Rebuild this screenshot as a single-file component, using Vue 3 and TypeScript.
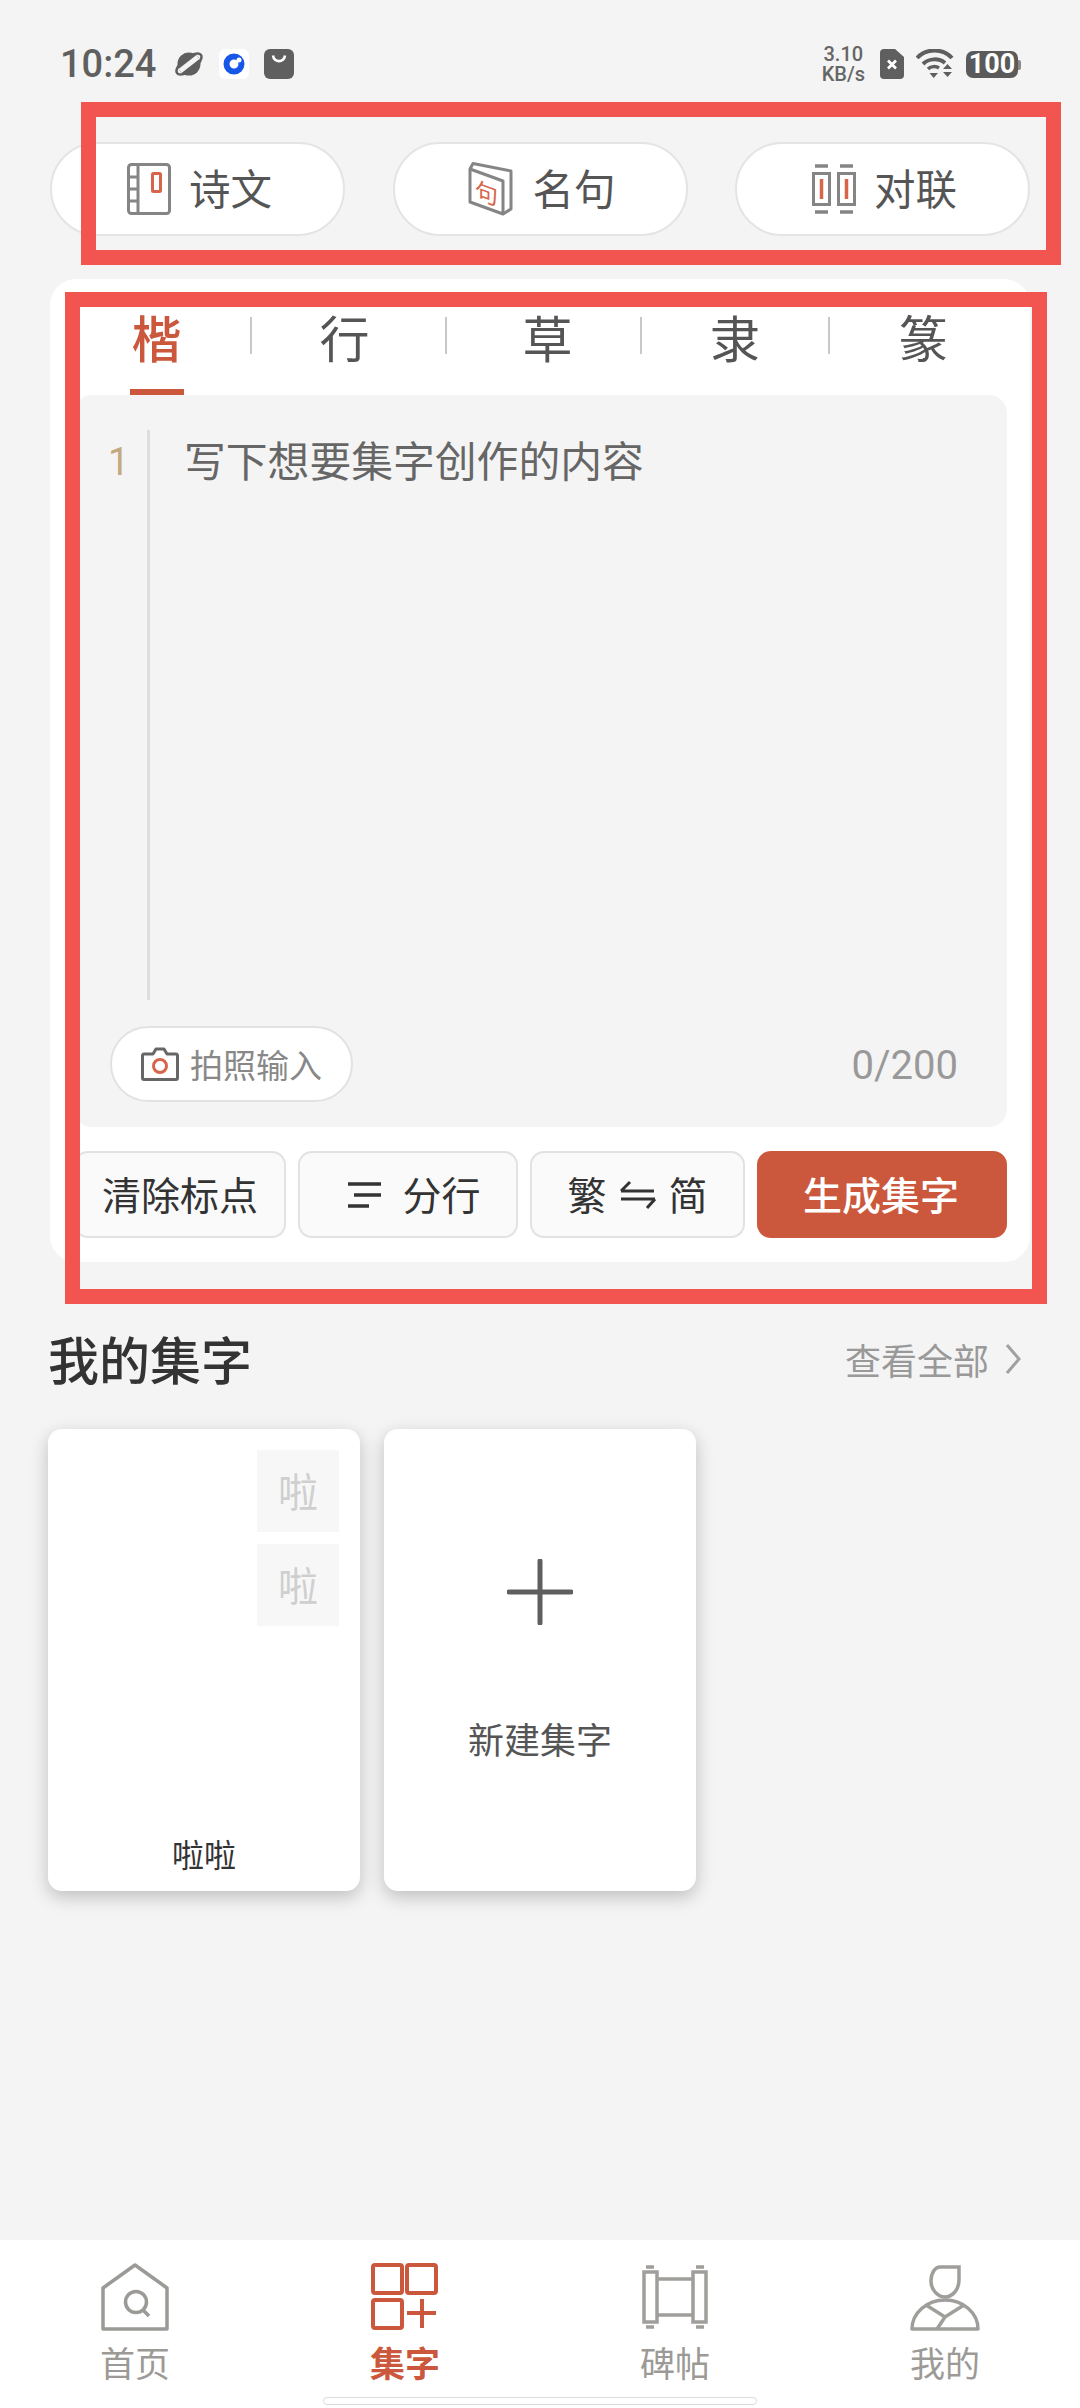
<template>
  <div class="page">
    <div class="status">
      <span class="time">10:24</span>
      <svg class="st-planet" width="30" height="28" viewBox="0 0 30 28">
        <circle cx="15" cy="14" r="11.5" fill="#5f5f5f" />
        <path d="M6 21 L24 7" stroke="#f4f4f4" stroke-width="5" />
        <ellipse cx="15" cy="14" rx="15" ry="6.5" transform="rotate(-38 15 14)" fill="none" stroke="#5f5f5f" stroke-width="2.5" />
      </svg>
      <span class="st-app">
        <svg width="22" height="22" viewBox="0 0 22 22">
          <circle cx="11" cy="11" r="7.5" fill="none" stroke="#1657e8" stroke-width="6" />
          <circle cx="16" cy="7" r="2.5" fill="#fff" />
        </svg>
      </span>
      <span class="st-bag">
        <svg width="16" height="10" viewBox="0 0 16 10">
          <path d="M2 1.5 C3 9 13 9 14 1.5" fill="none" stroke="#fff" stroke-width="2.6" />
        </svg>
      </span>
      <div class="status-right">
        <div class="speed"><span>3.10</span><span>KB/s</span></div>
        <svg width="24" height="30" viewBox="0 0 24 30">
          <path d="M4 0 H15 L24 8 V26 Q24 30 20 30 H4 Q0 30 0 26 V4 Q0 0 4 0Z" fill="#5f5f5f" />
          <path d="M8 11.5 L16 19.5 M16 11.5 L8 19.5" stroke="#fff" stroke-width="2.8" />
        </svg>
        <svg width="38" height="30" viewBox="0 0 38 30">
          <path d="M1 9 C10 -1 27 -1 36 9" fill="none" stroke="#5f5f5f" stroke-width="4" />
          <path d="M7 15 C13 9 23 9 29 14" fill="none" stroke="#5f5f5f" stroke-width="4" />
          <path d="M12 20 C15 17 20 17 23 19" fill="none" stroke="#5f5f5f" stroke-width="3.5" />
          <path d="M13.5 24 H22 L17.7 29Z" fill="#5f5f5f" />
          <path d="M27 20 L31.5 15 L36 20Z M27 23 H36 L31.5 28Z" fill="#5f5f5f" />
        </svg>
        <span class="battery">100</span>
      </div>
    </div>

    <div class="pills">
      <div class="pill">
        <svg width="44" height="52" viewBox="0 0 44 52" fill="none">
          <rect x="1.5" y="1.5" width="41" height="49" rx="3" stroke="#858585" stroke-width="3" />
          <path d="M11 2 V50" stroke="#858585" stroke-width="3" />
          <path d="M2 14 H11 M2 26 H11 M2 38 H11" stroke="#858585" stroke-width="3" />
          <rect x="25.5" y="10.5" width="8" height="18" rx="1" stroke="#d8654a" stroke-width="3" />
        </svg>
        <span>诗文</span>
      </div>
      <div class="pill">
        <svg width="46" height="54" viewBox="0 0 46 54" fill="none">
          <path d="M2 7 L35 19 V52 L2 40Z" stroke="#858585" stroke-width="3" stroke-linejoin="round" />
          <path d="M2 7 L5 1.500 L43 9 V47 L35 52" stroke="#858585" stroke-width="3" stroke-linejoin="round" />
          <text x="7" y="33" class="icon-ju" transform="skewY(20)">句</text>
        </svg>
        <span>名句</span>
      </div>
      <div class="pill">
        <svg width="44" height="50" viewBox="0 0 44 50" fill="none">
          <path d="M3 2 H16 M28 2 H41 M3 48 H16 M28 48 H41" stroke="#858585" stroke-width="3.500" />
          <rect x="1.5" y="9.5" width="16" height="31" stroke="#858585" stroke-width="3" />
          <rect x="26.5" y="9.5" width="16" height="31" stroke="#858585" stroke-width="3" />
          <path d="M9.5 15 V35 M34.5 15 V35" stroke="#d8654a" stroke-width="3.500" />
        </svg>
        <span>对联</span>
      </div>
    </div>

    <div class="card">
      <div class="tabs">
        <template v-for="(tab, i) in scripts" :key="tab">
          <i v-if="i > 0" class="sep"></i>
          <div class="tab" :class="'tab-' + i">
            <span class="tab-label" :class="{ active: i === 0 }">{{ tab }}</span>
          </div>
        </template>
      </div>

      <div class="editor">
        <div class="lines">
          <span class="line-no">1</span>
          <span class="placeholder">写下想要集字创作的内容</span>
        </div>
        <div class="editor-foot">
          <div class="photo">
            <svg width="38" height="34" viewBox="0 0 38 34" fill="none">
              <path d="M3 7 H12 L15 2 H23 L26 7 H35 Q36.500 7 36.500 9 V31 Q36.500 32.500 35 32.500 H3 Q1.500 32.500 1.500 31 V9 Q1.500 7 3 7Z" stroke="#666" stroke-width="3" stroke-linejoin="round" />
              <circle cx="19" cy="19" r="6.500" stroke="#d8654a" stroke-width="3" />
            </svg>
            <span>拍照输入</span>
          </div>
          <span class="count">0/200</span>
        </div>
      </div>

      <div class="actions">
        <div class="act act-clear">清除标点</div>
        <div class="act act-split">
          <svg width="36" height="28" viewBox="0 0 36 28">
            <path d="M1 3 H34 M7 14 H34 M1 25 H22" stroke="#333" stroke-width="3.500" />
          </svg>
          <span>分行</span>
        </div>
        <div class="act act-conv">
          <span>繁</span>
          <svg width="36" height="30" viewBox="0 0 36 30" fill="none">
            <path d="M1 11 H34 M1 11 L10 2" stroke="#333" stroke-width="3" />
            <path d="M1 19 H35 M35 19 L27 28" stroke="#333" stroke-width="3" />
          </svg>
          <span>简</span>
        </div>
        <div class="act act-go">生成集字</div>
      </div>
    </div>

    <div class="mine-head">
      <span class="mine-title">我的集字</span>
      <div class="mine-all">
        <span>查看全部</span>
        <svg width="18" height="34" viewBox="0 0 18 34" fill="none">
          <path d="M3 3 L15 17 L3 31" stroke="#a0a0a0" stroke-width="3" />
        </svg>
      </div>
    </div>

    <div class="works">
      <div class="work">
        <div class="tile">啦</div>
        <div class="tile">啦</div>
        <div class="work-title">啦啦</div>
      </div>
      <div class="work work-new">
        <svg width="66" height="66" viewBox="0 0 66 66">
          <path d="M33 2 V64 M2 33 H64" stroke="#5f5f5f" stroke-width="5" stroke-linecap="round" />
        </svg>
        <span>新建集字</span>
      </div>
    </div>

    <div class="nav">
      <div class="nav-item">
        <svg width="70" height="70" viewBox="0 0 70 70" fill="none" stroke="#9c9a96" stroke-width="3.500">
          <path d="M35 3 L67 26 V67 H3 V26Z" stroke-linejoin="round" />
          <circle cx="36" cy="40" r="10.500" />
          <path d="M43 48 L49 54" />
        </svg>
        <span>首页</span>
      </div>
      <div class="nav-item on">
        <svg width="70" height="70" viewBox="0 0 70 70" fill="none" stroke="#cb583d" stroke-width="4">
          <rect x="3" y="3" width="29" height="28" rx="2" />
          <rect x="37" y="3" width="29" height="28" rx="2" />
          <rect x="3" y="38" width="29" height="28" rx="2" />
          <path d="M37 51 H66 M52 37 V66" />
        </svg>
        <span>集字</span>
      </div>
      <div class="nav-item">
        <svg width="70" height="70" viewBox="0 0 70 70" fill="none" stroke="#a09e9a" stroke-width="3.500">
          <rect x="4" y="10" width="13" height="50" />
          <rect x="53" y="10" width="13" height="50" />
          <path d="M17 17 H53 M17 53 H53" />
          <path d="M6 5 H14 M56 5 H64 M6 65 H14 M56 65 H64" />
        </svg>
        <span>碑帖</span>
      </div>
      <div class="nav-item">
        <svg width="70" height="70" viewBox="0 0 70 70" fill="none" stroke="#a09e9a" stroke-width="3.500">
          <path d="M30 5 H49 V18 C49 28 42 35 35 35 C28 35 21 28 21 19 C21 11 25 5 30 5Z" />
          <path d="M2 67 A33 29 0 0 1 68 67Z" stroke-linejoin="round" />
          <path d="M16 43 L35 55 L54 43 M35 55 L27 67" />
        </svg>
        <span>我的</span>
      </div>
    </div>
    <div class="home-bar"></div>

    <div class="mark mark-top"></div>
    <div class="mark mark-main"></div>
  </div>
</template>

<script setup lang="ts">
const scripts: string[] = ['楷', '行', '草', '隶', '篆']
</script>

<style>
html,
body {
  margin: 0;
  background: #f4f4f4;
}
</style>

<style scoped>
.page {
  position: relative;
  width: 1080px;
  height: 2408px;
  overflow: hidden;
  display: flex;
  flex-direction: column;
  background: #f4f4f4;
  font-family: "Noto Sans CJK SC", Roboto, sans-serif;
  color: #333;
}

.status {
  display: flex;
  align-items: center;
  height: 34px;
  margin-top: 47px;
  padding: 0 60px 0 60px;
}

.time {
  font-family: Roboto, sans-serif;
  font-weight: 500;
  font-size: 38px;
  line-height: 34px;
  color: #5f5f5f;
}

.st-planet {
  margin-left: 18px;
}

.st-app {
  display: flex;
  align-items: center;
  justify-content: center;
  width: 30px;
  height: 30px;
  margin-left: 15px;
  border-radius: 6px;
  background: #fff;
}

.st-bag {
  display: flex;
  justify-content: center;
  width: 30px;
  height: 30px;
  margin-left: 15px;
  padding-top: 5px;
  box-sizing: border-box;
  border-radius: 6px;
  background: #5f5f5f;
}

.status-right {
  display: flex;
  align-items: center;
  gap: 12px;
  margin-left: auto;
}

.speed {
  display: flex;
  flex-direction: column;
  align-items: center;
  margin-right: 3px;
  font-family: Roboto, sans-serif;
  font-weight: 500;
  font-size: 20px;
  line-height: 20px;
  color: #666;
}

.battery {
  position: relative;
  width: 52px;
  height: 27px;
  margin-right: 2px;
  border-radius: 7px;
  background: #5a5a5a;
  font-family: Roboto, sans-serif;
  font-weight: 700;
  font-size: 27px;
  line-height: 27px;
  text-align: center;
  color: #fff;
}

.battery::after {
  content: "";
  position: absolute;
  right: -3px;
  top: 9px;
  width: 3px;
  height: 10px;
  border-radius: 0 2px 2px 0;
  background: #8a8a8a;
}

.pills {
  display: flex;
  justify-content: space-between;
  margin-top: 61px;
  padding: 0 50px;
}

.pill {
  display: flex;
  align-items: center;
  justify-content: center;
  gap: 18px;
  width: 295px;
  height: 94px;
  padding-left: 4px;
  box-sizing: border-box;
  border: 2px solid #e4e4e4;
  border-radius: 47px;
  background: #fff;
  font-size: 41.5px;
  color: #555;
}

.pill span {
  margin-bottom: 4px;
}

.icon-ju {
  font-size: 23px;
  fill: #d8654a;
}

.card {
  margin: 43px 50px 0;
  padding: 0 23px 24px 24px;
  border-radius: 26px;
  background: #fff;
}

.tabs {
  display: flex;
  align-items: flex-start;
  height: 116px;
  margin-left: -11px;
}

.tab {
  flex: none;
  width: 187px;
  margin-top: 27px;
  box-sizing: border-box;
  display: flex;
  justify-content: center;
}

.tab-1 {
  width: 193px;
  padding-right: 8px;
}

.tab-2 {
  width: 193px;
  padding-left: 8px;
}

.tab-3,
.tab-4 {
  width: 186px;
}

.tab-label {
  display: block;
  width: 54px;
  height: 83px;
  font-size: 50px;
  line-height: 60px;
  text-align: center;
  color: #555;
}

.tab-label.active {
  font-weight: 500;
  color: #cb583d;
  border-bottom: 6px solid #cb583d;
}

.sep {
  flex: none;
  width: 2px;
  height: 37px;
  margin-top: 38px;
  background: #c8c8c8;
}

.editor {
  height: 732px;
  padding: 35px 49px 25px 36px;
  box-sizing: border-box;
  display: flex;
  flex-direction: column;
  border-radius: 18px;
  background: #f4f4f4;
}

.lines {
  display: flex;
  height: 570px;
}

.line-no {
  width: 37px;
  font-family: Roboto, sans-serif;
  font-size: 38px;
  line-height: 60px;
  margin-top: 2px;
  margin-left: -2px;
  margin-right: 2px;
  color: #c4a97f;
}

.placeholder {
  flex: 1;
  padding-left: 34px;
  border-left: 3px solid #dddddd;
  font-size: 41.8px;
  line-height: 58px;
  color: #666;
}

.editor-foot {
  display: flex;
  align-items: center;
  justify-content: space-between;
  margin-top: 26px;
}

.photo {
  display: flex;
  align-items: center;
  justify-content: center;
  gap: 11px;
  width: 243px;
  height: 76px;
  box-sizing: border-box;
  border: 2px solid #e2e2e2;
  border-radius: 38px;
  background: #fff;
  font-size: 33px;
  color: #888;
}

.count {
  margin-top: 3px;
  font-family: Roboto, sans-serif;
  font-size: 40px;
  color: #999;
}

.actions {
  display: flex;
  gap: 12px;
  margin-top: 24px;
}

.act {
  display: flex;
  align-items: center;
  justify-content: center;
  height: 87px;
  box-sizing: border-box;
  border: 2px solid #e2e2e2;
  border-radius: 14px;
  background: #fafafa;
  font-size: 39px;
  color: #333;
}

.act span {
  margin-bottom: 4px;
}

.act-clear {
  width: 212px;
  padding-bottom: 4px;
}

.act-split {
  width: 220px;
  gap: 19px;
  padding-left: 12px;
}

.act-conv {
  width: 215px;
  gap: 13px;
}

.act-go {
  width: 250px;
  padding: 0 2px 4px 0;
  border: none;
  background: #cb583d;
  font-weight: 500;
  color: #fff;
}

.mine-head {
  display: flex;
  align-items: center;
  justify-content: space-between;
  height: 70px;
  margin-top: 65px;
  padding: 0 58px 0 48px;
}

.mine-title {
  margin-bottom: 8px;
  font-size: 51px;
  font-weight: 500;
  color: #333;
}

.mine-all {
  display: flex;
  align-items: center;
  gap: 15px;
  margin-bottom: 6px;
  font-size: 36px;
  color: #999;
}

.works {
  display: flex;
  gap: 24px;
  margin-top: 32px;
  padding-left: 48px;
}

.work {
  position: relative;
  display: flex;
  flex-direction: column;
  align-items: flex-end;
  gap: 12px;
  width: 312px;
  height: 462px;
  padding: 21px 21px 18px 0;
  box-sizing: border-box;
  border-radius: 14px;
  background: #fff;
  box-shadow: 0 6px 18px rgba(0, 0, 0, 0.22);
}

.tile {
  width: 82px;
  height: 82px;
  background: #f7f7f7;
  font-size: 40px;
  line-height: 80px;
  text-align: center;
  color: #cfcfcf;
}

.work-title {
  align-self: stretch;
  margin: auto -21px 0 0;
  font-size: 32px;
  line-height: 40px;
  text-align: center;
  color: #333;
}

.work-new {
  align-items: center;
  gap: 0;
  padding: 130px 0 0;
  font-size: 36px;
  line-height: 50px;
  color: #555;
}

.work-new span {
  margin-top: 88px;
}

.nav {
  display: flex;
  margin-top: auto;
  height: 168px;
  padding-top: 22px;
  box-sizing: border-box;
  background: #fff;
}

.nav-item {
  flex: 1;
  display: flex;
  flex-direction: column;
  align-items: center;
  gap: 10px;
  font-size: 35px;
  line-height: 40px;
  color: #9c9a96;
}

.nav-item.on {
  font-weight: 700;
  color: #cb583d;
}

.home-bar {
  position: absolute;
  left: 323px;
  bottom: 3px;
  width: 434px;
  height: 8px;
  box-sizing: border-box;
  border: 1px solid #dcdcdc;
  border-radius: 4px;
  background: #fff;
}

.mark {
  position: absolute;
  box-sizing: border-box;
  border: 15px solid #f2544f;
}

.mark-top {
  left: 81px;
  top: 102px;
  width: 980px;
  height: 163px;
}

.mark-main {
  left: 65px;
  top: 292px;
  width: 982px;
  height: 1012px;
}
</style>
